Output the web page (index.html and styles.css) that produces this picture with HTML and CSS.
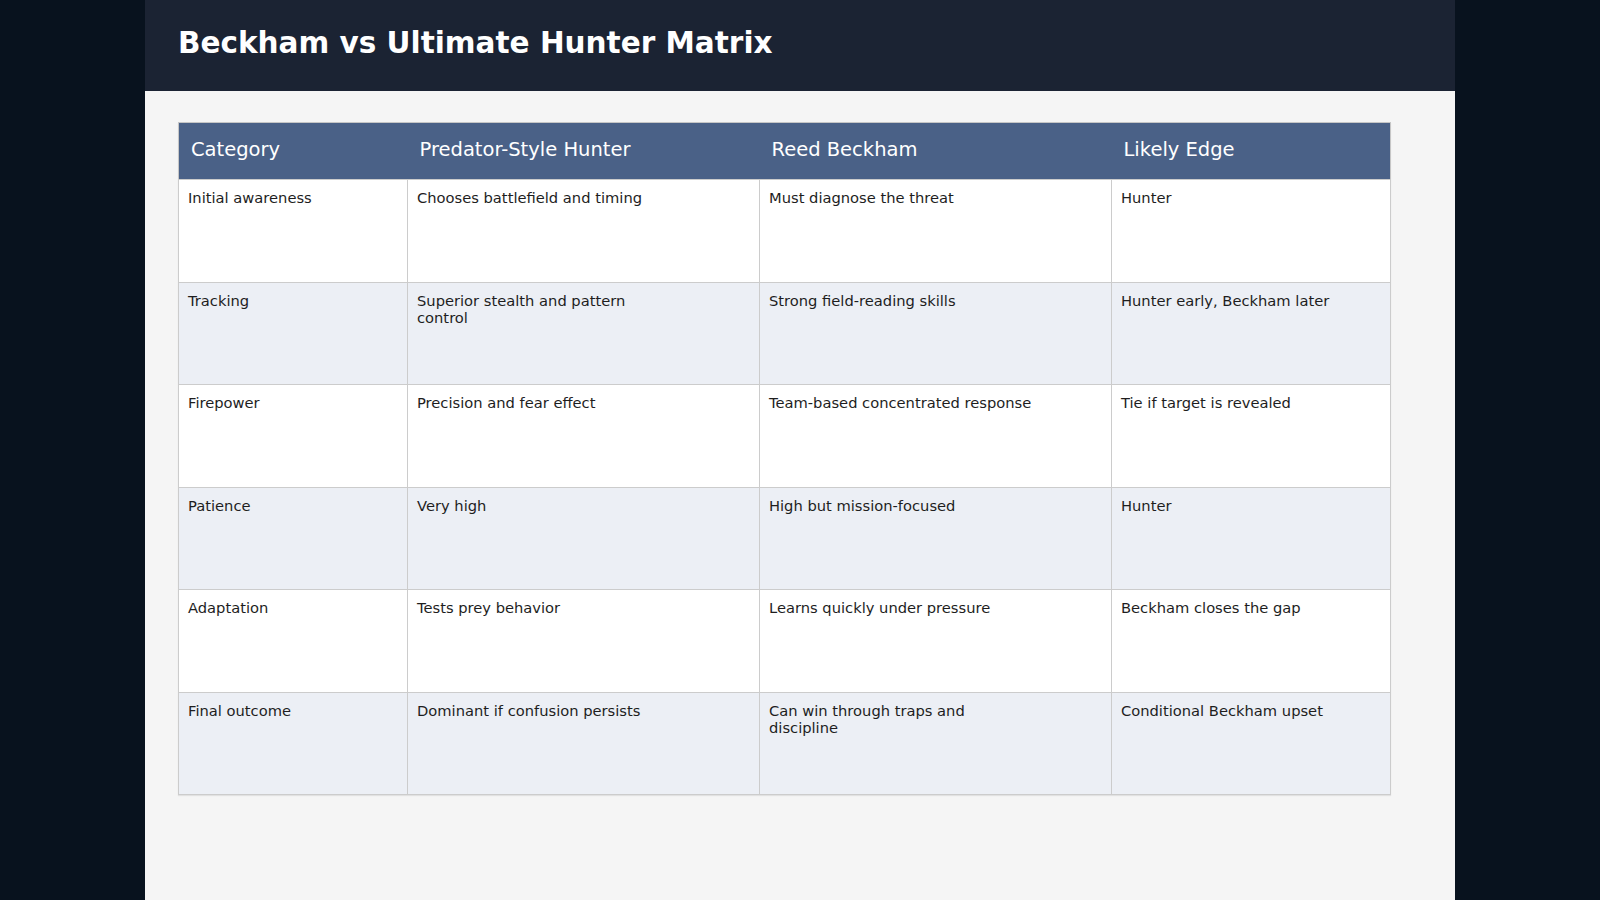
FILE: index.html
```html
<!DOCTYPE html>
<html>
<head>
<meta charset="utf-8">
<link rel="stylesheet" href="styles.css">
</head>
<body>
<div class="page">
  <header class="topbar">
    <h1 class="title">Beckham vs Ultimate Hunter Matrix</h1>
  </header>
  <main class="content">
    <table class="matrix">
      <colgroup>
        <col class="c1"><col class="c2"><col class="c3"><col class="c4">
      </colgroup>
      <thead>
        <tr><th>Category</th><th>Predator-Style Hunter</th><th>Reed Beckham</th><th>Likely Edge</th></tr>
      </thead>
      <tbody>
        <tr><td>Initial awareness</td><td>Chooses battlefield and timing</td><td>Must diagnose the threat</td><td>Hunter</td></tr>
        <tr><td>Tracking</td><td>Superior stealth and pattern<br>control</td><td>Strong field-reading skills</td><td>Hunter early, Beckham later</td></tr>
        <tr><td>Firepower</td><td>Precision and fear effect</td><td>Team-based concentrated response</td><td>Tie if target is revealed</td></tr>
        <tr><td>Patience</td><td>Very high</td><td>High but mission-focused</td><td>Hunter</td></tr>
        <tr><td>Adaptation</td><td>Tests prey behavior</td><td>Learns quickly under pressure</td><td>Beckham closes the gap</td></tr>
        <tr><td>Final outcome</td><td>Dominant if confusion persists</td><td>Can win through traps and<br>discipline</td><td>Conditional Beckham upset</td></tr>
      </tbody>
    </table>
  </main>
</div>
</body>
</html>
```

FILE: styles.css
```css
html, body {
  margin: 0;
  padding: 0;
  background: #08121e;
  font-family: "DejaVu Sans", "Liberation Sans", sans-serif;
}
.page {
  width: 1310px;
  height: 900px;
  margin: 0 auto;
  background: #f5f5f5;
  display: flex;
  flex-direction: column;
}
.topbar {
  background: #1b2333;
  height: 91px;
  box-sizing: border-box;
  padding: 0 33px;
  display: flex;
  align-items: center;
}
.title {
  margin: 0;
  color: #ffffff;
  font-size: 29.5px;
  font-weight: bold;
  padding-bottom: 6px;
}
.content {
  padding: 31px 33px;
}
.matrix {
  border-collapse: collapse;
  table-layout: fixed;
  width: 1212px;
  border: 1px solid #c6c6c6;
  box-shadow: 0 1px 1px rgba(0,0,0,0.08);
}
.c1 { width: 229px; }
.c2 { width: 352px; }
.c3 { width: 352px; }
.c4 { width: 279px; }
.matrix th {
  background: #4a6187;
  color: #ffffff;
  font-weight: normal;
  font-size: 19.5px;
  text-align: left;
  height: 57px;
  padding: 0 12px 3px;
  box-sizing: border-box;
}
.matrix td {
  border: 1px solid #cccccc;
  vertical-align: top;
  height: 102.5px;
  padding: 9px 9px;
  box-sizing: border-box;
  font-size: 14.7px;
  line-height: 17px;
  color: #1e1e1e;
  background: #ffffff;
}
.matrix tbody tr:nth-child(even) td {
  background: #eceff5;
}
```
